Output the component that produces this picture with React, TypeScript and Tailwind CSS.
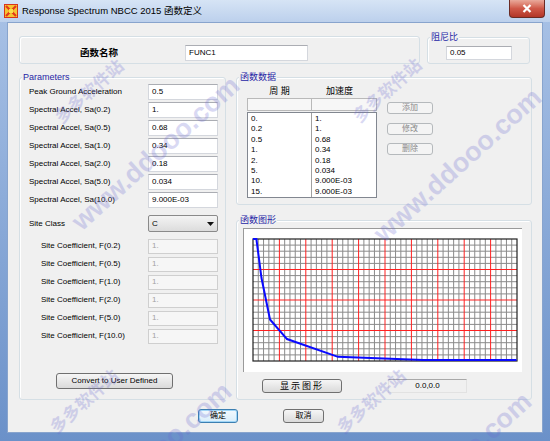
import React from 'react';

const FONT = "font-['Liberation_Sans','Noto_Sans_CJK_SC',sans-serif]";

const params: [string, string][] = [
  ['Peak Ground Acceleration', '0.5'],
  ['Spectral Accel, Sa(0.2)', '1.'],
  ['Spectral Accel, Sa(0.5)', '0.68'],
  ['Spectral Accel, Sa(1.0)', '0.34'],
  ['Spectral Accel, Sa(2.0)', '0.18'],
  ['Spectral Accel, Sa(5.0)', '0.034'],
  ['Spectral Accel, Sa(10.0)', '9.000E-03'],
];

const coeffs = ['F(0.2)', 'F(0.5)', 'F(1.0)', 'F(2.0)', 'F(5.0)', 'F(10.0)'];

const table: [string, string][] = [
  ['0.', '1.'],
  ['0.2', '1.'],
  ['0.5', '0.68'],
  ['1.', '0.34'],
  ['2.', '0.18'],
  ['5.', '0.034'],
  ['10.', '9.000E-03'],
  ['15.', '9.000E-03'],
];

function GroupBox({ title, className = '', children }: { title?: string; className?: string; children?: React.ReactNode }) {
  return (
    <div className={`relative rounded-[3px] border border-[#d5dfe5] shadow-[inset_1px_1px_0_#ffffff] ${className}`}>
      {title && (
        <span className="absolute -top-[7px] left-[2px] bg-[#f0f0f0] px-[1px] text-[9px] leading-[12px] text-[#2626a6]">
          {title}
        </span>
      )}
      {children}
    </div>
  );
}

function Field({ value, className = '', disabled = false }: { value: string; className?: string; disabled?: boolean }) {
  return (
    <div
      className={`flex items-center border px-[3px] text-[8px] leading-none ${
        disabled
          ? 'border-[#cfcfcf] bg-[#f6f6f6] text-[#a3a3a3]'
          : 'border-[#d4d7dd] border-t-[#abadb3] bg-white text-black'
      } ${className}`}
    >
      {value}
    </div>
  );
}

function Btn({ label, className = '', disabled = false, focused = false }: { label: string; className?: string; disabled?: boolean; focused?: boolean }) {
  let tone = 'border-[#707070] bg-linear-to-b from-[#f6f6f6] to-[#dadada] text-black';
  if (disabled) tone = 'border-[#b5b9bc] bg-[#f4f4f4] text-[#8a8a8a]';
  if (focused) tone = 'border-[#3c7fb1] bg-linear-to-b from-[#f3f9fd] to-[#d9eefb] text-black shadow-[inset_0_0_0_1px_#9fd5f6]';
  return (
    <div className={`flex items-center justify-center rounded-[3px] border text-[8px] leading-none ${tone} ${className}`}>
      {label}
    </div>
  );
}

function Chart() {
  const x0 = 10;
  const y0 = 11;
  const w = 264;
  const h = 122;
  const vx = Array.from({ length: 49 }, (_, i) => i + 1);
  const hy = Array.from({ length: 19 }, (_, i) => i + 1);
  const pts: [number, number][] = [
    [0, 1], [0.2, 1], [0.5, 0.68], [1, 0.34], [2, 0.18], [5, 0.034], [10, 0.009], [15, 0.009], [15.5, 0.009],
  ];
  const line = pts.map(([t, a]) => `${x0 + 17 * t},${y0 + (1 - a) * h}`).join(' ');
  return (
    <svg width="279" height="144" className="block">
      <rect x="0" y="0" width="279" height="144" fill="#ffffff" />
      <line x1="0" y1="0.5" x2="279" y2="0.5" stroke="#9a9a9a" />
      <line x1="0.5" y1="0" x2="0.5" y2="144" stroke="#9a9a9a" />
      {vx.filter((i) => i % 5 !== 0).map((i) => (
        <line key={`v${i}`} x1={x0 + i * 5.28} y1={y0} x2={x0 + i * 5.28} y2={y0 + h} stroke="#8a8a8a" strokeWidth="1" />
      ))}
      {hy.filter((j) => j % 5 !== 0).map((j) => (
        <line key={`h${j}`} x1={x0} y1={y0 + j * 6.1} x2={x0 + w} y2={y0 + j * 6.1} stroke="#8a8a8a" strokeWidth="1" />
      ))}
      {vx.filter((i) => i % 5 === 0).map((i) => (
        <line key={`V${i}`} x1={x0 + i * 5.28} y1={y0} x2={x0 + i * 5.28} y2={y0 + h} stroke="#ff2020" strokeWidth="1" />
      ))}
      {hy.filter((j) => j % 5 === 0).map((j) => (
        <line key={`H${j}`} x1={x0} y1={y0 + j * 6.1} x2={x0 + w} y2={y0 + j * 6.1} stroke="#ff2020" strokeWidth="1" />
      ))}
      <rect x={x0} y={y0} width={w} height={h} fill="none" stroke="#202020" strokeWidth="1.2" />
      <polyline points={line} fill="none" stroke="#0a0aff" strokeWidth="2" />
    </svg>
  );
}

function Watermarks() {
  const cn = 'absolute whitespace-nowrap origin-left rotate-[-42deg] font-bold text-[#6a6ad0] opacity-25';
  return (
    <div className="pointer-events-none absolute inset-0 overflow-hidden">
      <span className={`${cn} left-[58px] top-[112px] text-[17px] leading-[17px]`}>多多软件站</span>
      <span className={`${cn} left-[356px] top-[111px] text-[17px] leading-[17px]`}>多多软件站</span>
      <span className={`${cn} left-[53px] top-[422px] text-[17px] leading-[17px]`}>多多软件站</span>
      <span className={`${cn} left-[340px] top-[422px] text-[17px] leading-[17px]`}>多多软件站</span>
      <span className={`${cn} left-[76px] top-[212px] text-[27px] leading-[27px]`}>www.ddooo.com</span>
      <span className={`${cn} left-[378px] top-[224px] text-[27px] leading-[27px]`}>www.ddooo.com</span>
      <span className={`${cn} left-[68px] top-[518px] text-[27px] leading-[27px]`}>www.ddooo.com</span>
      <span className={`${cn} left-[368px] top-[528px] text-[27px] leading-[27px]`}>www.ddooo.com</span>
    </div>
  );
}

export default function App() {
  return (
    <div className={`relative h-[441px] w-[550px] overflow-hidden bg-linear-to-b from-[#a9c2e6] to-[#6b91c9] ${FONT}`}>
      {/* title bar */}
      <div className="relative flex h-[22px] items-center bg-linear-to-b from-[#d6e4f5] to-[#bcd0ec] pl-[4px]">
        <svg width="14" height="14" viewBox="0 0 14 14" className="mr-[4px]">
          <rect x="0.5" y="0.5" width="13" height="13" fill="#f6c531" stroke="#d8341c" />
          <path d="M2 2 L12 12 M12 2 L2 12" stroke="#e23a1a" strokeWidth="2.2" />
          <rect x="5" y="5" width="4" height="4" fill="#f7e04a" />
        </svg>
        <span className="text-[9.5px] text-black">Response Spectrum NBCC 2015 函数定义</span>
        <div className="absolute right-[5px] top-0 flex h-[18px] w-[36px] items-center justify-center rounded-b-[4px] border border-t-0 border-[#6a2b24] bg-linear-to-b from-[#e9a99b] via-[#cf5848] to-[#b23527]">
          <svg width="10" height="9" viewBox="0 0 10 9">
            <path d="M1.5 1 L8.5 8 M8.5 1 L1.5 8" stroke="#ffffff" strokeWidth="2.2" />
          </svg>
        </div>
      </div>

      {/* client */}
      <div className="mx-[7px] h-[411px] border border-[#88a4cd] bg-[#f0f0f0] pl-[11px] pt-[13px] text-black">
        <div className="flex items-start">
          <GroupBox className="flex h-[28px] w-[401px] items-center pt-[6px]">
            <span className="ml-[60px] text-[9.5px] font-bold">函数名称</span>
            <Field value="FUNC1" className="ml-[67px] h-[16px] w-[123px]" />
          </GroupBox>
          <GroupBox title="阻尼比" className="ml-[7px] mt-[1px] h-[27px] w-[103px] pl-[18px] pt-[8px]">
            <Field value="0.05" className="h-[14px] w-[66px]" />
          </GroupBox>
        </div>

        <div className="mt-[13px] flex">
          <GroupBox title="Parameters" className="flex h-[323px] w-[207px] flex-col pl-[9px] pr-[7px] pt-[5px]">
            {params.map(([label, value]) => (
              <div key={label} className="flex h-[18px] items-center justify-between">
                <span className="text-[8px]">{label}</span>
                <Field value={value} className="h-[16px] w-[70px]" />
              </div>
            ))}
            <div className="mt-[6px] flex h-[17px] items-center justify-between">
              <span className="text-[8px]">Site Class</span>
              <div className="flex h-[17px] w-[70px] items-center justify-between rounded-[2px] border border-[#8a8a8a] bg-linear-to-b from-[#f4f4f4] to-[#dcdcdc] px-[3px] text-[8px]">
                <span>C</span>
                <svg width="7" height="4" viewBox="0 0 7 4">
                  <path d="M0 0 L7 0 L3.5 4 Z" fill="#111111" />
                </svg>
              </div>
            </div>
            <div className="mt-[5px] flex flex-col">
              {coeffs.map((c) => (
                <div key={c} className="flex h-[18px] items-center justify-between">
                  <span className="ml-[12px] text-[8px]">Site Coefficient, {c}</span>
                  <Field value="1." disabled className="h-[15px] w-[70px]" />
                </div>
              ))}
            </div>
            <Btn label="Convert to User Defined" className="ml-[27px] mt-[28px] h-[16px] w-[117px]" />
          </GroupBox>

          <div className="ml-[10px] flex w-[296px] flex-col">
            <GroupBox title="函数数据" className="flex h-[128px] pl-[10px] pt-[8px]">
              <div className="flex w-[130px] flex-col">
                <div className="flex h-[12px] items-center text-[9px]">
                  <span className="w-[65px] text-center">周 期</span>
                  <span className="w-[65px] pr-[10px] text-center">加速度</span>
                </div>
                <div className="flex h-[13px]">
                  <div className="h-[13px] w-[65px] border border-[#b9b9b9] bg-[#f7f7f7]" />
                  <div className="h-[13px] w-[65px] border border-l-0 border-[#b9b9b9] bg-[#f7f7f7]" />
                </div>
                <div className="mt-[1px] flex h-[86px] border border-[#828790] bg-white text-[8px]">
                  <div className="w-[64px] border-r border-[#a0a0a0] pl-[3px] pt-[1px] leading-[10.4px]">
                    {table.map(([t]) => (
                      <div key={t}>{t}</div>
                    ))}
                  </div>
                  <div className="flex-1 pl-[3px] pt-[1px] leading-[10.4px]">
                    {table.map(([t, a]) => (
                      <div key={t}>{a}</div>
                    ))}
                  </div>
                </div>
              </div>
              <div className="ml-[10px] mt-[16px] flex flex-col gap-[8.5px]">
                <Btn label="添加" disabled className="h-[12px] w-[46px]" />
                <Btn label="修改" disabled className="h-[12px] w-[46px]" />
                <Btn label="删除" disabled className="h-[12px] w-[46px]" />
              </div>
            </GroupBox>

            <GroupBox title="函数图形" className="mt-[15px] flex h-[180px] flex-col pl-[6px] pt-[7px]">
              <Chart />
              <div className="mt-[7px] flex items-center">
                <Btn label="显示图形" className="ml-[19px] h-[14px] w-[80px] text-[9px] tracking-[2px]" />
                <div className="ml-[46px] flex h-[14px] w-[79px] items-center justify-center border border-[#e2e2e2] border-t-[#a9a9a9] text-[8px]">
                  0.0,0.0
                </div>
              </div>
            </GroupBox>
          </div>
        </div>

        <div className="mt-[9px] flex">
          <Btn label="确定" focused className="ml-[179px] h-[14px] w-[40px]" />
          <Btn label="取消" className="ml-[45px] h-[14px] w-[41px]" />
        </div>
      </div>

      <Watermarks />
    </div>
  );
}
